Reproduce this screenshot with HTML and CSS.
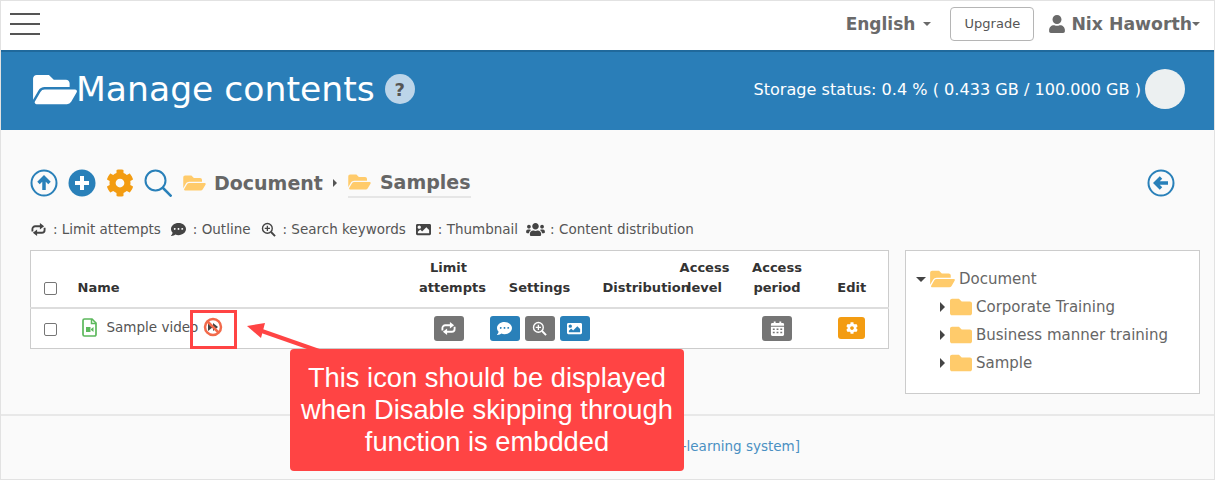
FILE: index.html
```html
<!DOCTYPE html>
<html lang="en">
<head>
  <meta charset="UTF-8" />
  <meta name="viewport" content="width=device-width, initial-scale=1" />
  <title>Manage contents</title>
  <link rel="stylesheet" href="styles.css">
</head>
<body>
  <svg class="defs" aria-hidden="true">
    <symbol id="i-folder-open" viewBox="0 0 576 512"><path fill="currentColor" d="M572.694 292.093L500.27 416.248A63.997 63.997 0 0 1 444.989 448H45.025c-18.523 0-30.064-20.093-20.731-36.093l72.424-124.155A64 64 0 0 1 152 256h399.964c18.523 0 30.064 20.093 20.73 36.093zM152 224h328v-48c0-26.51-21.49-48-48-48H272l-64-64H48C21.49 64 0 85.49 0 112v278.046l69.077-118.418C86.214 242.25 117.989 224 152 224z"/></symbol>
    <symbol id="i-folder" viewBox="0 0 512 512"><path fill="currentColor" d="M464 128H272l-64-64H48C21.49 64 0 85.49 0 112v288c0 26.51 21.49 48 48 48h416c26.51 0 48-21.49 48-48V176c0-26.51-21.49-48-48-48z"/></symbol>
    <symbol id="i-user" viewBox="0 0 448 512"><path fill="currentColor" d="M224 256c70.7 0 128-57.3 128-128S294.7 0 224 0 96 57.3 96 128s57.3 128 128 128zm89.6 32h-16.7c-22.2 10.2-46.9 16-72.9 16s-50.6-5.8-72.9-16h-16.7C60.2 288 0 348.2 0 422.4V464c0 26.5 21.5 48 48 48h352c26.5 0 48-21.5 48-48v-41.6c0-74.2-60.2-134.4-134.4-134.4z"/></symbol>
    <symbol id="i-cog" viewBox="0 0 512 512"><path fill="currentColor" d="M487.4 315.7l-42.6-24.6c4.3-23.2 4.3-47 0-70.2l42.6-24.6c4.9-2.8 7.1-8.6 5.5-14-11.1-35.6-30-67.8-54.7-94.6-3.8-4.1-10-5.1-14.8-2.3L380.8 110c-17.9-15.4-38.5-27.3-60.8-35.1V25.8c0-5.6-3.9-10.5-9.4-11.7-36.7-8.2-74.3-7.8-109.2 0-5.5 1.2-9.4 6.1-9.4 11.7V75c-22.2 7.9-42.8 19.8-60.8 35.1L88.7 85.5c-4.9-2.8-11-1.9-14.8 2.3-24.7 26.7-43.6 58.9-54.7 94.6-1.7 5.4.6 11.2 5.5 14L67.3 221c-4.3 23.2-4.3 47 0 70.2l-42.6 24.6c-4.9 2.8-7.1 8.6-5.5 14 11.1 35.6 30 67.8 54.7 94.6 3.8 4.1 10 5.1 14.8 2.3l42.6-24.6c17.9 15.4 38.5 27.3 60.8 35.1v49.2c0 5.6 3.9 10.5 9.4 11.7 36.7 8.2 74.3 7.8 109.2 0 5.5-1.2 9.4-6.1 9.4-11.7v-49.2c22.2-7.9 42.8-19.8 60.8-35.1l42.6 24.6c4.9 2.8 11 1.9 14.8-2.3 24.7-26.7 43.6-58.9 54.7-94.6 1.5-5.5-.7-11.3-5.6-14.1zM256 336c-44.1 0-80-35.9-80-80s35.9-80 80-80 80 35.9 80 80-35.9 80-80 80z"/></symbol>
    <symbol id="i-comment" viewBox="0 0 512 512"><path fill="currentColor" d="M256 32C114.6 32 0 125.1 0 240c0 49.6 21.4 95 57 130.7C44.5 421.1 2.7 466 2.2 466.5c-2.2 2.3-2.8 5.7-1.5 8.7S4.8 480 8 480c66.3 0 116-31.8 140.6-51.4 32.7 12.3 69 19.4 107.4 19.4 141.4 0 256-93.1 256-208S397.4 32 256 32zM128 272c-17.7 0-32-14.3-32-32s14.3-32 32-32 32 14.3 32 32-14.3 32-32 32zm128 0c-17.7 0-32-14.3-32-32s14.3-32 32-32 32 14.3 32 32-14.3 32-32 32zm128 0c-17.7 0-32-14.3-32-32s14.3-32 32-32 32 14.3 32 32-14.3 32-32 32z"/></symbol>
    <symbol id="i-image" viewBox="0 0 512 512"><path fill="currentColor" d="M464 448H48c-26.51 0-48-21.49-48-48V112c0-26.51 21.49-48 48-48h416c26.51 0 48 21.49 48 48v288c0 26.51-21.49 48-48 48zM112 120c-30.928 0-56 25.072-56 56s25.072 56 56 56 56-25.072 56-56-25.072-56-56-56zM64 384h384V272l-87.515-87.515c-4.686-4.686-12.284-4.686-16.971 0L208 320l-55.515-55.515c-4.686-4.686-12.284-4.686-16.971 0L64 336v48z"/></symbol>
    <symbol id="i-users" viewBox="0 0 640 512"><path fill="currentColor" d="M96 224c35.3 0 64-28.7 64-64s-28.7-64-64-64-64 28.7-64 64 28.7 64 64 64zm448 0c35.3 0 64-28.7 64-64s-28.7-64-64-64-64 28.7-64 64 28.7 64 64 64zm32 32h-64c-17.6 0-33.5 7.1-45.1 18.6 40.3 22.1 68.9 62 75.1 109.4h66c17.7 0 32-14.3 32-32v-32c0-35.3-28.7-64-64-64zm-256 0c61.9 0 112-50.1 112-112S381.9 32 320 32 208 82.1 208 144s50.1 112 112 112zm76.8 32h-8.3c-20.8 10-43.9 16-68.5 16s-47.6-6-68.5-16h-8.3C179.6 288 128 339.6 128 403.2V432c0 26.5 21.5 48 48 48h288c26.5 0 48-21.5 48-48v-28.8c0-63.6-51.6-115.2-115.2-115.2zm-223.7-13.4C161.5 263.1 145.6 256 128 256H64c-35.3 0-64 28.7-64 64v32c0 17.7 14.3 32 32 32h65.9c6.3-47.4 34.9-87.3 75.2-109.4z"/></symbol>
    <symbol id="i-retweet" viewBox="0 0 16 16"><g fill="none" stroke="currentColor" stroke-width="2"><path d="M1.500 10V7.500A3 3 0 0 1 4.500 4.500H10"/><path d="M14.500 6v2.500a3 3 0 0 1-3 3H6"/></g><path fill="currentColor" d="M9.500 1l4.500 3.500-4.500 3.500zM6.500 8l-4.500 3.500 4.500 3.500z"/></symbol>
    <symbol id="i-zoom" viewBox="0 0 16 16"><g fill="none" stroke="currentColor"><circle cx="6.800" cy="6.800" r="5.200" stroke-width="1.500"/><path d="M10.700 10.700L15 15" stroke-width="2"/><path d="M6.800 4v5.600M4 6.800h5.600" stroke-width="1.400"/></g></symbol>
    <symbol id="i-calendar" viewBox="0 0 14 16"><path fill="currentColor" d="M1.500 2H3V.5h2V2h4V.5h2V2h1.500A1.500 1.500 0 0 1 14 3.500V5H0V3.500A1.500 1.500 0 0 1 1.500 2zM0 6h14v8.500a1.500 1.500 0 0 1-1.500 1.500h-11A1.500 1.500 0 0 1 0 14.500z"/><path fill="#757575" d="M2 8h2v1.500H2zM6 8h2v1.500H6zM10 8h2v1.500h-2zM2 11.500h2V13H2zM6 11.500h2V13H6zM10 11.500h2V13h-2z"/></symbol>
  </svg>

  <div class="page">
    <header class="topnav">
      <div class="burger"><span></span><span></span><span></span></div>
      <div class="topnav-right">
        <span class="lang">English<i class="caret"></i></span>
        <button class="upgrade">Upgrade</button>
        <span class="account">
          <svg class="user-icon"><use href="#i-user"/></svg>Nix Haworth<i class="caret caret-tight"></i>
        </span>
      </div>
    </header>

    <section class="banner">
      <h1 class="banner-title">
        <svg class="title-icon"><use href="#i-folder-open"/></svg>Manage contents
        <span class="help">?</span>
      </h1>
      <div class="storage">
        <span>Storage status: 0.4 % ( 0.433 GB / 100.000 GB )</span>
        <div class="pie"></div>
      </div>
    </section>

    <main class="content">
      <div class="toolbar">
        <svg class="tool" viewBox="0 0 28 28">
          <circle cx="14" cy="14" r="12.500" fill="none" stroke="#2980b9" stroke-width="2"/>
          <path d="M14 21V9M8.500 14L14 8.500l5.500 5.500" fill="none" stroke="#2980b9" stroke-width="3.500"/>
        </svg>
        <svg class="tool" viewBox="0 0 28 28">
          <circle cx="14" cy="14" r="13.500" fill="#2980b9"/>
          <path d="M14 7v14M7 14h14" stroke="#fff" stroke-width="4"/>
        </svg>
        <svg class="tool tool-cog"><use href="#i-cog"/></svg>
        <svg class="tool" viewBox="0 0 28 28">
          <circle cx="11.500" cy="11.500" r="10" fill="none" stroke="#2980b9" stroke-width="2"/>
          <path d="M18.500 18.500L27.500 27.500" stroke="#2980b9" stroke-width="2.500"/>
        </svg>
        <nav class="crumbs">
          <svg class="crumb-folder"><use href="#i-folder-open"/></svg>
          <span>Document</span>
          <i class="crumb-sep"></i>
          <span class="crumb-current">
            <svg class="crumb-folder"><use href="#i-folder-open"/></svg>
            <span>Samples</span>
          </span>
        </nav>
        <svg class="tool tool-back" viewBox="0 0 28 28">
          <circle cx="14" cy="14" r="12.500" fill="none" stroke="#2980b9" stroke-width="2"/>
          <path d="M21 14H9M14 8.500L8.500 14l5.500 5.500" fill="none" stroke="#2980b9" stroke-width="3.500"/>
        </svg>
      </div>

      <ul class="legend">
        <li><svg class="legend-icon"><use href="#i-retweet"/></svg>: Limit attempts</li>
        <li><svg class="legend-icon"><use href="#i-comment"/></svg>: Outline</li>
        <li><svg class="legend-icon"><use href="#i-zoom"/></svg>: Search keywords</li>
        <li><svg class="legend-icon"><use href="#i-image"/></svg>: Thumbnail</li>
        <li><svg class="legend-icon legend-wide"><use href="#i-users"/></svg>: Content distribution</li>
      </ul>

      <div class="columns">
        <table class="files">
          <colgroup>
            <col class="c-check"><col class="c-name"><col class="c-limit"><col class="c-settings">
            <col class="c-dist"><col class="c-level"><col class="c-period"><col class="c-edit">
          </colgroup>
          <thead>
            <tr>
              <th><span class="check"></span></th>
              <th class="left">Name</th>
              <th><span class="limit-top">Limit</span><br>attempts</th>
              <th>Settings</th>
              <th class="left nowrap dist">Distribution</th>
              <th>Access<br>level</th>
              <th>Access<br>period</th>
              <th class="edit">Edit</th>
            </tr>
          </thead>
          <tbody>
            <tr>
              <td><span class="check"></span></td>
              <td class="left">
                <div class="file-name">
                  <svg class="file-icon" viewBox="0 0 15 19">
                    <path d="M1 2.500A1.500 1.500 0 0 1 2.500 1H10l4 4v11.500a1.500 1.500 0 0 1-1.500 1.500h-10A1.500 1.500 0 0 1 1 16.500z" fill="#fff" stroke="#5cb85c" stroke-width="1.700"/>
                    <path d="M9.500 1v4.500H14" fill="none" stroke="#5cb85c" stroke-width="1.500"/>
                    <path d="M4 9h4.500v5H4zM9 11l2.500-2v5L9 12z" fill="#5cb85c"/>
                  </svg>
                  <span>Sample video</span>
                  <svg class="noskip" viewBox="0 0 20 20">
                    <path d="M5 6l5 4-5 4zM10 6l5 4-5 4z" fill="#444"/>
                    <circle cx="10" cy="10" r="8" fill="none" stroke="#f26a4b" stroke-width="2.500"/>
                    <path d="M4.500 4.500l11 11" stroke="#f26a4b" stroke-width="2.500"/>
                  </svg>
                </div>
              </td>
              <td class="limit-cell"><span class="btn btn-gray"><svg class="btn-icon"><use href="#i-retweet"/></svg></span></td>
              <td>
                <div class="btn-group">
                  <span class="btn btn-blue"><svg class="btn-icon"><use href="#i-comment"/></svg></span>
                  <span class="btn btn-gray"><svg class="btn-icon"><use href="#i-zoom"/></svg></span>
                  <span class="btn btn-blue"><svg class="btn-icon"><use href="#i-image"/></svg></span>
                </div>
              </td>
              <td></td>
              <td></td>
              <td><span class="btn btn-gray"><svg class="btn-icon"><use href="#i-calendar"/></svg></span></td>
              <td class="edit"><span class="btn btn-orange"><svg class="btn-icon btn-icon-small"><use href="#i-cog"/></svg></span></td>
            </tr>
          </tbody>
        </table>

        <aside class="tree">
          <div class="tree-row">
            <i class="tri tri-down"></i>
            <svg class="tree-open"><use href="#i-folder-open"/></svg>
            <span>Document</span>
          </div>
          <div class="tree-row tree-child">
            <i class="tri"></i>
            <svg class="tree-folder"><use href="#i-folder"/></svg>
            <span>Corporate Training</span>
          </div>
          <div class="tree-row tree-child">
            <i class="tri"></i>
            <svg class="tree-folder"><use href="#i-folder"/></svg>
            <span>Business manner training</span>
          </div>
          <div class="tree-row tree-child">
            <i class="tri"></i>
            <svg class="tree-folder"><use href="#i-folder"/></svg>
            <span>Sample</span>
          </div>
        </aside>
      </div>
    </main>

    <footer class="footer"><a class="footer-link">[e-learning system]</a></footer>

    <!-- annotation drawn over the screenshot -->
    <div class="mark-box"></div>
    <svg class="mark-arrow" viewBox="0 0 80 32">
      <path d="M72 28L12 7" stroke="#ff4444" stroke-width="4"/>
      <path d="M0 3l18-3-4 15z" fill="#ff4444"/>
    </svg>
    <div class="callout">This icon should be displayed when Disable skipping through function is embdded</div>
  </div>
</body>
</html>
```

FILE: styles.css
```css
* {
  box-sizing: border-box;
}
body {
  margin: 0;
  font-family: "DejaVu Sans", Verdana, sans-serif;
  color: #555;
  background-color: #fff;
}
.defs {
  display: none;
}
.page {
  position: relative;
  height: 480px;
  overflow: hidden;
  display: flex;
  flex-direction: column;
  background-color: #fafafa;
  border: 1px solid #e2e2e2;
}

/* top nav */
.topnav {
  height: 49px;
  flex-shrink: 0;
  background-color: #fff;
  display: flex;
  justify-content: space-between;
  align-items: center;
  padding: 0 14px 4px 9px;
}
.burger {
  width: 30px;
  display: flex;
  flex-direction: column;
  gap: 8px;
}
.burger span {
  height: 2px;
  background-color: #555;
}
.topnav-right {
  display: flex;
  align-items: center;
}
.lang,
.account {
  font-size: 17px;
  font-weight: 700;
  color: #6a6a6a;
  display: flex;
  align-items: center;
}
.account {
  font-size: 17.3px;
}
.caret {
  width: 0;
  height: 0;
  margin-left: 8px;
  border-top: 4px solid #6a6a6a;
  border-left: 4px solid transparent;
  border-right: 4px solid transparent;
}
.caret-tight {
  margin-left: 0;
}
.upgrade {
  margin-left: 19px;
  width: 84px;
  height: 34px;
  padding: 0;
  font: 13px "DejaVu Sans", Verdana, sans-serif;
  color: #555;
  background-color: #fff;
  border: 1px solid #b5b5b5;
  border-radius: 4px;
}
.account {
  margin-left: 15px;
}
.user-icon {
  width: 16px;
  height: 18px;
  margin-right: 6px;
  color: #6a6a6a;
}

/* blue title band */
.banner {
  height: 80px;
  flex-shrink: 0;
  background-color: #2a7eb8;
  border-top: 2px solid #20699c;
  display: flex;
  justify-content: space-between;
  align-items: center;
  padding: 0 29px 4px 32px;
  color: #fff;
}
.banner-title {
  margin: 0;
  font-size: 34.6px;
  font-weight: 400;
  display: flex;
  align-items: center;
}
.title-icon {
  width: 44px;
  height: 39px;
  margin-right: -1px;
  color: #fff;
}
.help {
  width: 30px;
  height: 30px;
  margin-left: 10px;
  border-radius: 50%;
  background-color: #bcd5e9;
  color: #555;
  font-size: 18px;
  font-weight: 700;
  display: flex;
  justify-content: center;
  align-items: center;
}
.storage {
  display: flex;
  align-items: center;
  gap: 4px;
  font-size: 16.1px;
}
.pie {
  width: 40px;
  height: 40px;
  border-radius: 50%;
  background: conic-gradient(#f1c40f 0 0.4%, #ecf0f1 0);
}

/* main area */
.content {
  flex-grow: 1;
  padding: 39px 14px 0 29px;
}
.toolbar {
  display: flex;
  align-items: center;
  height: 28px;
  gap: 10px;
}
.tool {
  width: 28px;
  height: 28px;
  flex-shrink: 0;
}
.tool-cog {
  color: #f39c12;
}
.tool-back {
  margin-left: auto;
  margin-right: 25px;
}
.crumbs {
  display: flex;
  align-items: center;
  gap: 8px;
  margin-left: 1px;
  font-size: 19px;
  font-weight: 700;
  color: #666;
}
.crumb-folder {
  width: 23px;
  height: 20px;
  color: #ffcb6b;
}
.crumb-sep {
  width: 0;
  height: 0;
  margin: 0 3px 0 2px;
  border-left: 4px solid #555;
  border-top: 4px solid transparent;
  border-bottom: 4px solid transparent;
}
.crumb-current {
  display: flex;
  align-items: center;
  gap: 9px;
  padding-bottom: 3px;
  margin-top: 3px;
  border-bottom: 2px solid #e6e6e6;
}
.legend {
  list-style: none;
  margin: 22px 0 0;
  padding: 0 0 0 1px;
  display: flex;
  gap: 10px;
  font-size: 13.5px;
  line-height: 20px;
  height: 20px;
  color: #555;
}
.legend li {
  display: flex;
  align-items: center;
}
.legend-icon {
  width: 15px;
  height: 15px;
  margin-right: 7px;
  color: #444;
}
.legend-wide {
  width: 19px;
  margin-left: -2px;
  margin-right: 5px;
}
.columns {
  display: flex;
  align-items: flex-start;
  gap: 16px;
  margin-top: 11px;
}

/* files table */
.files {
  width: 858px;
  flex-shrink: 0;
  table-layout: fixed;
  border-collapse: collapse;
  background-color: #fff;
  border: 1px solid #ccc;
  font-size: 13.5px;
}
.c-check { width: 40px; }
.c-name { width: 346px; }
.c-limit { width: 72px; }
.c-settings { width: 102px; }
.c-dist { width: 84px; }
.c-level { width: 60px; }
.c-period { width: 85px; }
.c-edit { width: 69px; }
.files th {
  height: 57px;
  padding: 0 0 9px;
  font-weight: 700;
  font-size: 13px;
  line-height: 20px;
  color: #333;
  text-align: center;
  vertical-align: bottom;
  border-bottom: 2px solid #ddd;
}
.files td {
  height: 41px;
  padding: 0;
  text-align: center;
  vertical-align: middle;
}
.files .left {
  text-align: left;
  padding-left: 7px;
}
.files .nowrap {
  white-space: nowrap;
}
.files .dist {
  padding-left: 12px;
}
.files .edit {
  padding-right: 4px;
}
.limit-top {
  display: inline-block;
  padding-right: 8px;
}
.files .limit-cell {
  padding-right: 8px;
}
.check {
  display: inline-block;
  width: 13px;
  height: 13px;
  vertical-align: middle;
  background-color: #fff;
  border: 1px solid #767676;
  border-radius: 2px;
}
.file-name {
  display: flex;
  align-items: center;
  padding-left: 4px;
  margin-top: -2px;
  color: #555;
  font-size: 13.5px;
}
.file-icon {
  width: 15px;
  height: 19px;
  margin-right: 10px;
}
.noskip {
  width: 20px;
  height: 20px;
  margin-left: 5px;
}
.btn-group {
  display: flex;
  justify-content: center;
  gap: 5px;
}
.btn {
  display: inline-flex;
  justify-content: center;
  align-items: center;
  width: 30px;
  height: 25px;
  vertical-align: middle;
  border-radius: 3px;
  color: #fff;
}
.btn-gray {
  background-color: #757575;
}
.btn-blue {
  background-color: #2980b9;
}
.btn-orange {
  width: 27px;
  height: 22px;
  background-color: #f39c12;
}
.btn-icon {
  width: 15px;
  height: 15px;
}
.btn-icon-small {
  width: 12px;
  height: 12px;
}

/* folder tree */
.tree {
  width: 296px;
  height: 144px;
  padding: 14px 10px;
  background-color: #fff;
  border: 1px solid #ccc;
  font-size: 15px;
  color: #666;
}
.tree-row {
  height: 28px;
  display: flex;
  align-items: center;
}
.tree-child {
  padding-left: 24px;
}
.tri {
  width: 0;
  height: 0;
  margin-right: 5px;
  border-left: 5px solid #444;
  border-top: 5px solid transparent;
  border-bottom: 5px solid transparent;
}
.tri-down {
  margin-right: 4px;
  border-top: 5px solid #444;
  border-left: 5px solid transparent;
  border-right: 5px solid transparent;
  border-bottom: 0;
}
.tree-open {
  width: 25px;
  height: 22px;
  margin-right: 4px;
  color: #ffcb6b;
}
.tree-folder {
  width: 22px;
  height: 22px;
  margin-right: 4px;
  color: #ffcb6b;
}

/* footer */
.footer {
  height: 65px;
  flex-shrink: 0;
  border-top: 2px solid #e8e8e8;
  display: flex;
  justify-content: flex-end;
  align-items: center;
  padding: 0 414px 4px 0;
  font-size: 13.5px;
}
.footer-link {
  color: #4a90c2;
}

/* annotation */
.mark-box {
  position: absolute;
  left: 189px;
  top: 309px;
  width: 47px;
  height: 39px;
  border: 3px solid #ff4444;
}
.mark-arrow {
  position: absolute;
  left: 246px;
  top: 322px;
  width: 80px;
  height: 32px;
}
.callout {
  position: absolute;
  left: 289px;
  top: 348px;
  width: 394px;
  height: 122px;
  padding: 13px 8px 0;
  background-color: #ff4444;
  border-radius: 4px;
  color: #fff;
  font-family: "Liberation Sans", Arial, sans-serif;
  font-size: 27.3px;
  line-height: 32px;
  text-align: center;
}
```
